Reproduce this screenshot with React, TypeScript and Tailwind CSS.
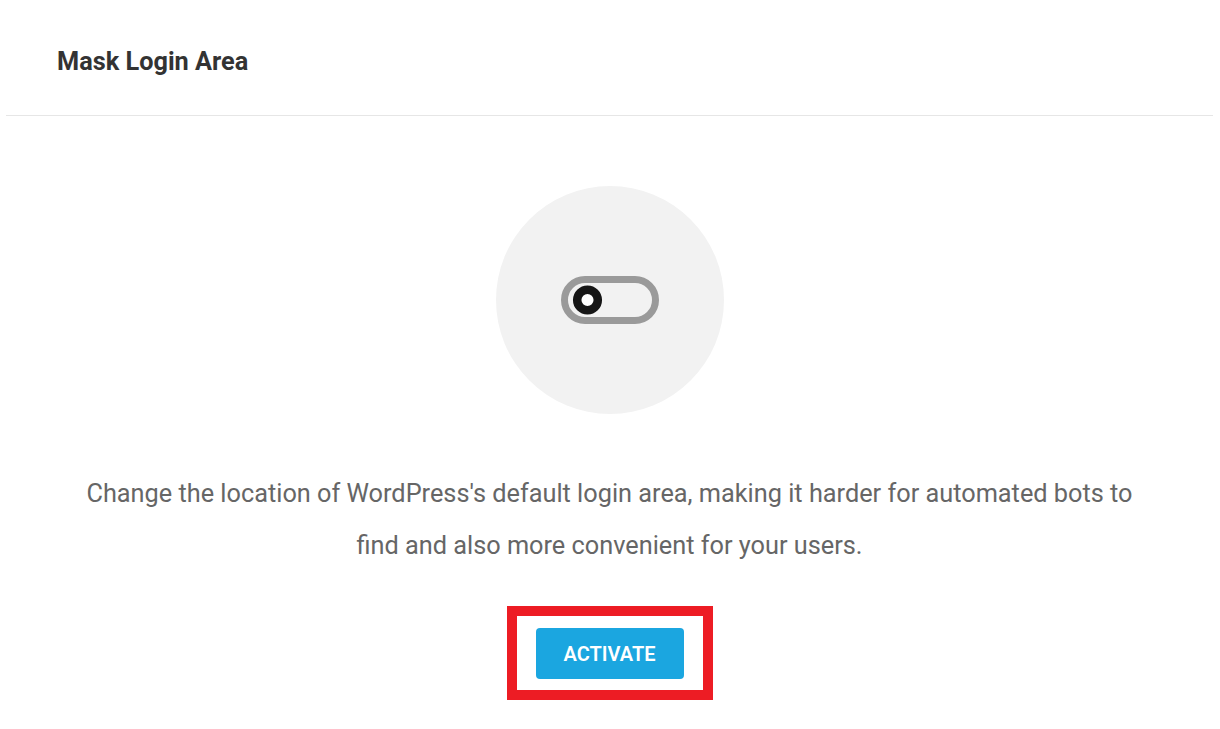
export default function App() {
  return (
    <div className="min-h-[729px] bg-white font-['Roboto','Liberation_Sans',sans-serif]">
      <div className="mx-[6px] w-[1207px]">
        {/* Header */}
        <div className="h-[116px] border-b border-[#e6e6e6] pl-[51px] flex items-center">
          <h1 className="text-[25.3px] font-bold text-[#333333] leading-none pt-[9px]">Mask Login Area</h1>
        </div>

        {/* Body */}
        <div className="flex flex-col items-center pt-[70px]">
          <div className="w-[228px] h-[228px] rounded-full bg-[#f2f2f2] flex items-center justify-center">
            <svg width="104" height="54" viewBox="0 0 104 54" fill="none">
              <rect x="6.5" y="6.5" width="91" height="41" rx="20.5" stroke="#9a9a9a" strokeWidth="7" />
              <circle cx="29.5" cy="27" r="10.3" stroke="#161616" strokeWidth="8.5" fill="white" />
            </svg>
          </div>

          <p className="mt-[54px] text-center text-[25.3px] leading-[52px] text-[#666666] max-w-[1120px]">
            Change the location of WordPress's default login area, making it harder for automated bots to
            <br />
            find and also more convenient for your users.
          </p>

          <div className="mt-[34px] border-[10px] border-[#ed1c24] px-[19px] pt-[12px] pb-[11px]">
            <button className="w-[148px] h-[51px] rounded-[4px] bg-[#1ba6e0] text-white text-[20px] font-semibold uppercase">
              Activate
            </button>
          </div>
        </div>
      </div>
    </div>
  )
}
